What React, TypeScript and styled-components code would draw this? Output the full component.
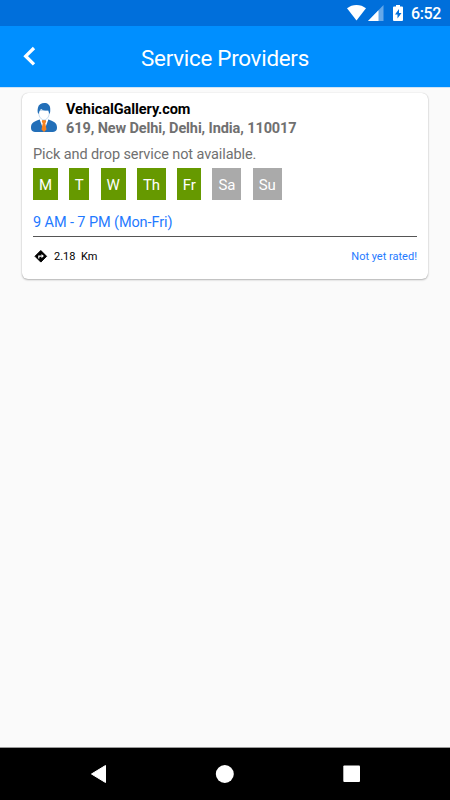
import React from "react";
import styled, { createGlobalStyle } from "styled-components";

const GlobalStyle = createGlobalStyle`
  *, *::before, *::after { box-sizing: border-box; }
  body { margin: 0; background: #fafafa; font-family: Roboto, "Liberation Sans", sans-serif; }
`;

const Screen = styled.div`
  width: 450px;
  height: 800px;
  display: flex;
  flex-direction: column;
  background: #fafafa;
  overflow: hidden;
`;

const StatusBar = styled.header`
  height: 26px;
  flex: none;
  display: flex;
  align-items: center;
  justify-content: space-between;
  padding: 0 9px 0 347px;
  background: #006fdb;
  color: #fff;
`;

const StatusIcons = styled.svg`
  display: block;
  flex: none;
  width: 60px;
  height: 26px;
`;

const Clock = styled.span`
  font-size: 16px;
  font-weight: 500;
  letter-spacing: -0.4px;
  line-height: 26px;
  padding-top: 2px;
`;

const AppBar = styled.nav`
  height: 61px;
  flex: none;
  display: grid;
  grid-template-columns: 60px 1fr 60px;
  align-items: center;
  background: #008fff;
  box-shadow: 0 1px 0 #cfe3f5;
`;

const BackButton = styled.button`
  width: 60px;
  height: 61px;
  padding: 0;
  border: 0;
  background: none;
  svg { display: block; }
`;

const Title = styled.h1`
  margin: 0;
  padding-top: 2px;
  text-align: center;
  color: #fff;
  font-size: 22.4px;
  font-weight: 400;
  letter-spacing: -0.26px;
  line-height: 30px;
`;

const Content = styled.main`
  flex: 1;
  padding: 6px 22px 0;
`;

const Card = styled.article`
  height: 186px;
  padding: 7px 11px 0;
  background: #fff;
  border-radius: 6px;
  box-shadow: 0 1px 2px rgba(0, 0, 0, 0.28), 0 0 1px rgba(0, 0, 0, 0.2);
`;

const Provider = styled.div`
  display: flex;
  height: 41px;
  gap: 8px;
  margin-left: -3px;
`;

const Avatar = styled.svg`
  flex: none;
  width: 28px;
  height: 36px;
`;

const Name = styled.h2`
  margin: 0;
  color: #000;
  font-size: 14.5px;
  font-weight: 700;
  letter-spacing: -0.06px;
  line-height: 19px;
`;

const Address = styled.p`
  margin: 0;
  color: #707070;
  font-size: 14.5px;
  font-weight: 700;
  letter-spacing: -0.1px;
  line-height: 19px;
`;

const Note = styled.p`
  margin: 0;
  height: 27px;
  padding-top: 4px;
  color: #707070;
  font-size: 14.5px;
  letter-spacing: -0.1px;
  line-height: 20px;
`;

const Days = styled.div`
  display: flex;
  gap: 11.3px;
`;

const Day = styled.span<{ $open: boolean; $width: number }>`
  width: ${(p) => p.$width}px;
  height: 32px;
  text-align: center;
  color: #fff;
  background: ${(p) => (p.$open ? "#669900" : "#aaaaaa")};
  font-size: 15px;
  letter-spacing: -0.1px;
  line-height: 34px;
`;

const Hours = styled.p`
  margin: 0;
  height: 36px;
  padding-top: 12px;
  color: #1f7aff;
  font-size: 14.5px;
  letter-spacing: -0.1px;
  line-height: 21px;
`;

const Footer = styled.div`
  display: flex;
  align-items: center;
  justify-content: space-between;
  height: 39px;
  border-top: 1px solid #555;
  font-size: 11px;
  color: #000;
`;

const Distance = styled.span`
  display: flex;
  align-items: center;
  gap: 6px;
  white-space: pre;
`;

const Rating = styled.span`
  color: #1f7aff;
`;

const SystemNav = styled.footer`
  height: 53px;
  flex: none;
  background: #000;
  border-top: 1px solid #999;
  svg { display: block; }
`;

const days = [
  { label: "M", open: true, width: 25 },
  { label: "T", open: true, width: 20 },
  { label: "W", open: true, width: 25 },
  { label: "Th", open: true, width: 29 },
  { label: "Fr", open: true, width: 24 },
  { label: "Sa", open: false, width: 29 },
  { label: "Su", open: false, width: 29 },
];

export default function App() {
  return (
    <>
      <GlobalStyle />
      <Screen>
        <StatusBar>
          <StatusIcons viewBox="0 0 60 26" fill="#fff">
            <path d="M0 8.300C5.200 3.800 13.800 3.800 19 8.300L9.500 20.500Z" />
            <path d="M36.500 5v16H21Z" opacity=".4" />
            <path d="M31.500 10.200V21H21Z" />
            <path
              fillRule="evenodd"
              d="M47 6.500h2V5h4v1.500h2q1 0 1 1V20q0 1-1 1h-8q-1 0-1-1V7.500q0-1 1-1ZM52 9l-4 5.500h2.500V18.500l4-5.500H52Z"
            />
          </StatusIcons>
          <Clock>6:52</Clock>
        </StatusBar>
        <AppBar>
          <BackButton aria-label="Back">
            <svg width="60" height="61" viewBox="0 0 60 61" fill="none" stroke="#fff" strokeWidth="3.3">
              <path d="M34 22L25.700 30.200L34 38.400" />
            </svg>
          </BackButton>
          <Title>Service Providers</Title>
        </AppBar>
        <Content>
          <Card>
            <Provider>
              <Avatar viewBox="0 0 28 36">
                <path d="M1 27.500C1 23 4 21.300 9.500 19.500L14 23l4.500-3.500C24 21.300 27 23 27 27.500c0 3.500-2 4.500-5 4.500H6c-3 0-5-1-5-4.500Z" fill="#236fb8" />
                <path d="M10 18.500h8v2L14 31l-4-10.500Z" fill="#fff" />
                <path d="M12.300 20h3.400l.5 1.800-.9 1.400 1.200 6.300-2.500 2.500-2.500-2.500 1.200-6.300-.9-1.400Z" fill="#f58220" />
                <path d="M8.800 10.500h10.400V13c0 4-2.700 7-5.200 7s-5.200-3-5.200-7Z" fill="#fff" stroke="#8db6dc" strokeWidth=".5" />
                <path d="M8.600 14C7.200 12.500 7.500 9.500 8 7.500C8.600 4.700 11.200 3 14.300 3c3.500 0 5.700 2 5.900 5.200.1 2.200.2 4.500-.8 5.800l-1.100-3.600c-3 .2-5.500-.3-7.300-1.500L9.500 11Z" fill="#236fb8" />
              </Avatar>
              <div>
                <Name>VehicalGallery.com</Name>
                <Address>619, New Delhi, Delhi, India, 110017</Address>
              </div>
            </Provider>
            <Note>Pick and drop service not available.</Note>
            <Days>
              {days.map((d) => (
                <Day key={d.label} $open={d.open} $width={d.width}>
                  {d.label}
                </Day>
              ))}
            </Days>
            <Hours>9 AM - 7 PM (Mon-Fri)</Hours>
            <Footer>
              <Distance>
                <svg width="15" height="15" viewBox="0 0 15 15">
                  <path d="M7.800 1.500L13.600 7.300L7.800 13.100L2 7.300Z" fill="#000" stroke="#000" strokeLinejoin="round" />
                  <path d="M5.800 9.500V7.100h3" fill="none" stroke="#fff" strokeWidth="1.200" />
                  <path d="M8.500 4.900L10.900 7.100L8.500 9.300Z" fill="#fff" />
                </svg>
                <span>2.18  Km</span>
              </Distance>
              <Rating>Not yet rated!</Rating>
            </Footer>
          </Card>
        </Content>
        <SystemNav>
          <svg width="450" height="52" viewBox="0 0 450 52" fill="#fff">
            <path d="M91.500 26L105.500 17.500V34.500Z" stroke="#fff" strokeLinejoin="round" />
            <circle cx="224.800" cy="26" r="9" />
            <rect x="343.300" y="17.500" width="16.700" height="16.500" rx="1" />
          </svg>
        </SystemNav>
      </Screen>
    </>
  );
}
